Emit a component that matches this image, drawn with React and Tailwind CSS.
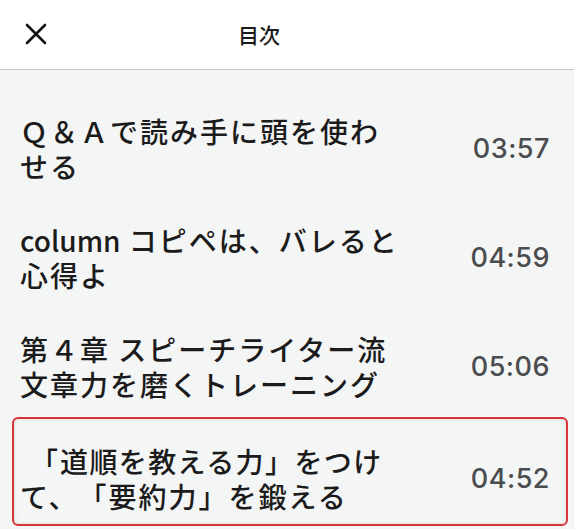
import React from 'react';

const jp = { fontFamily: '"Noto Sans CJK JP", "Noto Sans", sans-serif' };
const num = { fontFamily: 'Inter, Roboto, "Liberation Sans", Arial, sans-serif' };

const items = [
  { lines: ['Ｑ＆Ａで読み手に頭を使わ', 'せる'], time: '03:57' },
  {
    lines: [
      <>
        <span className="tracking-normal">column</span> コピペは、バレると
      </>,
      '心得よ',
    ],
    time: '04:59',
  },
  { lines: ['第４章 スピーチライター流', '文章力を磨くトレーニング'], time: '05:06' },
];

const Row = ({ lines, time }) => (
  <div className="flex items-center justify-between">
    <div
      className="text-[28px] leading-[35px] tracking-[2px] font-medium text-[#1b1b1b] whitespace-nowrap [text-spacing-trim:space-all]"
      style={jp}
    >
      {lines[0]}
      <br />
      {lines[1]}
    </div>
    <div className="text-[27px] tracking-[0.5px] font-medium text-[#4a4c4e]" style={num}>
      {time}
    </div>
  </div>
);

export default function App() {
  return (
    <div className="w-[574px] h-[529px] overflow-hidden bg-[#f4f5f5]">
      {/* header */}
      <div className="relative h-[70px] bg-white border-b border-[#c6c6c6] flex items-center justify-center pr-[56px]">
        <button className="absolute left-[25px] top-[23px] w-[22px] h-[22px] flex items-center justify-center">
          <svg width="22" height="22" viewBox="0 0 22 22" fill="none" stroke="#111" strokeWidth="2.6" strokeLinecap="round">
            <path d="M2 2 L20 20 M20 2 L2 20" />
          </svg>
        </button>
        <h1 className="text-[21px] font-medium text-[#1b1b1b]" style={jp}>目次</h1>
      </div>

      {/* chapters */}
      <div className="pt-[44px] pl-[20px] pr-[24px] flex flex-col gap-[39px]">
        {items.map((it) => (
          <Row key={it.time} {...it} />
        ))}
      </div>

      {/* current chapter */}
      <div className="mt-[15px] ml-[12px] mr-[6px] pl-[6px] pr-[16px] pt-[25px] pb-[10px] border-2 border-[#d9343a] rounded-[6px] shadow-[inset_0_0_4px_rgba(0,0,0,0.12)]">
        <Row
          lines={[
            <>
              <span className="ml-[10px]">「</span>
              <span className="tracking-[1.4px]">道順を教える力」をつけ</span>
            </>,
            'て、「要約力」を鍛える',
          ]}
          time="04:52"
        />
      </div>
    </div>
  );
}
